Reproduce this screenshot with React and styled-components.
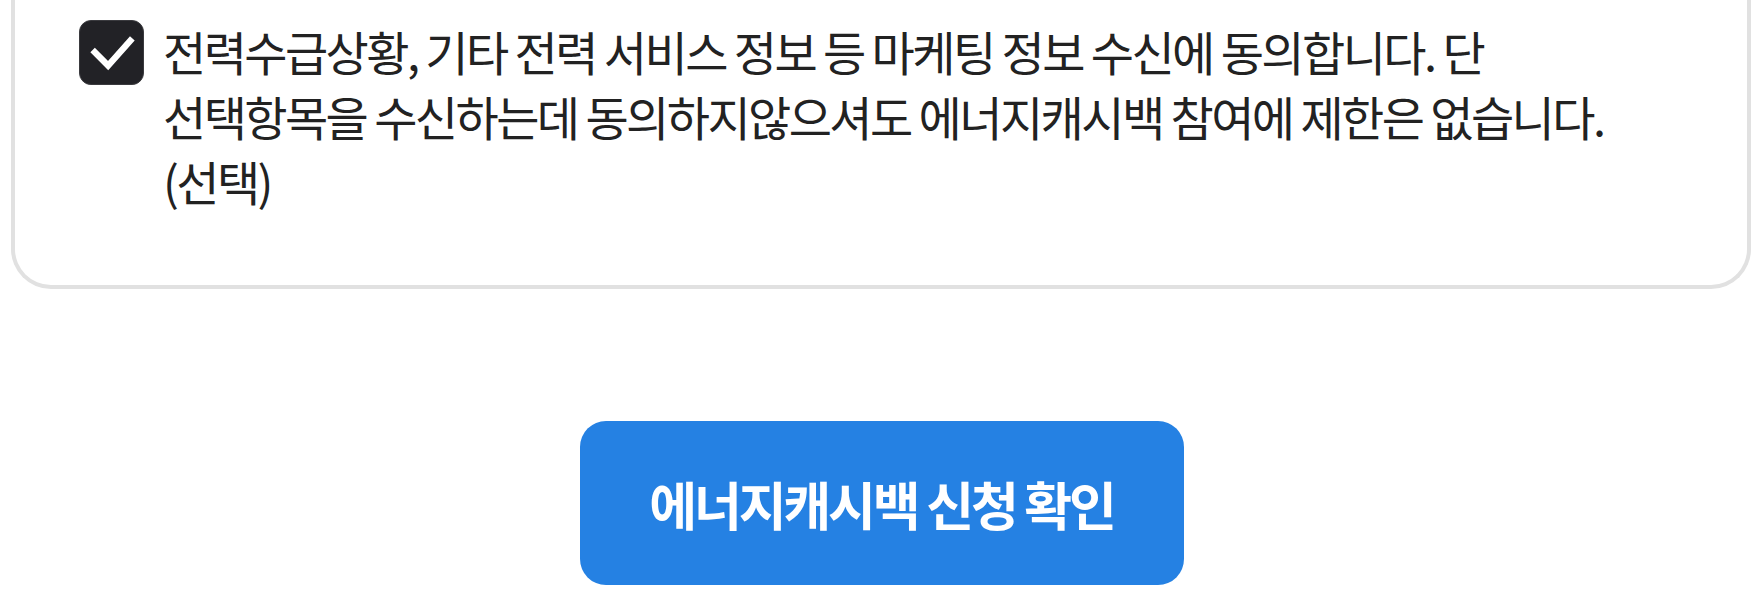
import styled, { createGlobalStyle } from "styled-components";

const GlobalStyle = createGlobalStyle`
  html, body {
    margin: 0;
    padding: 0;
    background: #ffffff;
  }
  body {
    font-family: "Noto Sans CJK KR", "Noto Sans", sans-serif;
    color: #222222;
  }
`;

const Page = styled.main`
  width: 1763px;
  display: flex;
  flex-direction: column;
  align-items: center;
`;

const Card = styled.section`
  align-self: flex-start;
  box-sizing: border-box;
  width: 1740px;
  margin-left: 11px;
  padding: 20px 60px 72px 64px;
  background: #ffffff;
  border: 4px solid #e1e1e1;
  border-top: 0;
  border-radius: 0 0 40px 40px;
`;

const ConsentRow = styled.label`
  display: flex;
  align-items: flex-start;
  gap: 19px;
  cursor: pointer;
`;

const Box = styled.span`
  flex: 0 0 auto;
  width: 65px;
  height: 65px;
  border-radius: 12px;
  background: ${(p) => (p.$checked ? "#222226" : "#ffffff")};
  border: 1px solid ${(p) => (p.$checked ? "#3a3a3e" : "#c8c8c8")};
  box-sizing: border-box;
  display: flex;
  align-items: center;
  justify-content: center;
`;

const ConsentText = styled.p`
  margin: 0;
  margin-top: -2px;
  max-width: 1480px;
  font-size: 47px;
  line-height: 65px;
  letter-spacing: -0.055em;
  font-weight: 400;
  word-break: keep-all;
  color: #222222;
`;

const SubmitButton = styled.button`
  margin-top: 132px;
  width: 604px;
  height: 164px;
  border: 0;
  border-radius: 26px;
  background: #2581e3;
  color: #ffffff;
  font-family: "Noto Sans CJK KR", "Noto Sans", sans-serif;
  font-size: 52px;
  font-weight: 700;
  letter-spacing: -0.06em;
  cursor: pointer;
`;

const CheckIcon = () => (
  <svg width="65" height="65" viewBox="0 0 65 65" style={{ display: "block" }}>
    <polyline
      points="13,30 29,46 54,18"
      fill="none"
      stroke="#ffffff"
      strokeWidth="6.5"
      strokeLinejoin="miter"
    />
  </svg>
);

export default function App() {
  return (
    <>
      <GlobalStyle />
      <Page>
        <Card>
          <ConsentRow>
            <Box $checked>
              <CheckIcon />
            </Box>
            <ConsentText>
              전력수급상황, 기타 전력 서비스 정보 등 마케팅 정보 수신에 동의합니다. 단
              선택항목을 수신하는데 동의하지않으셔도 에너지캐시백 참여에 제한은 없습니다.
              (선택)
            </ConsentText>
          </ConsentRow>
        </Card>
        <SubmitButton type="button">에너지캐시백 신청 확인</SubmitButton>
      </Page>
    </>
  );
}
